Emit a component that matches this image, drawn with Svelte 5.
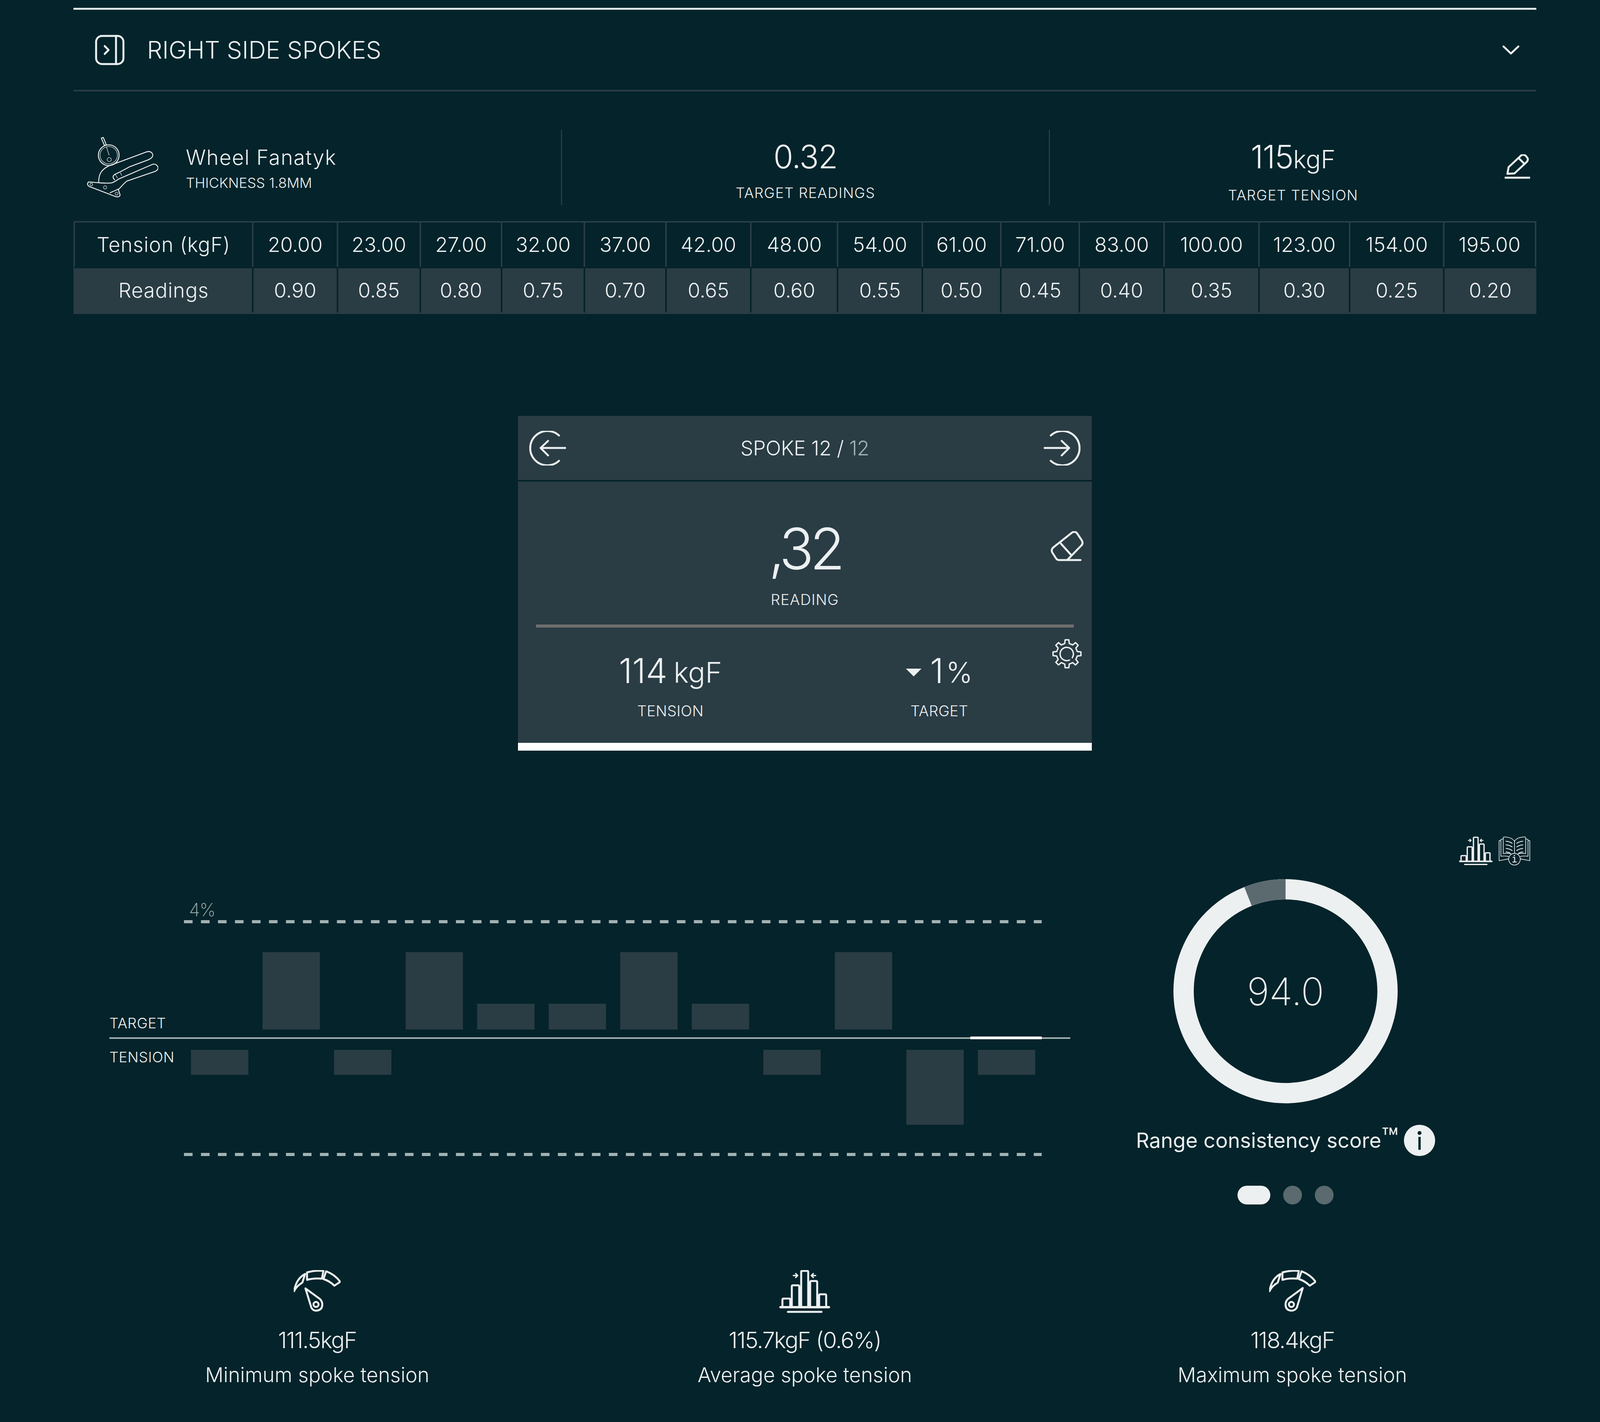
<script>
  const colWidths = [498, 236, 231, 227, 231, 227, 237, 242, 236, 219, 219, 236, 265, 253, 262, 260];
  const tableWidth = colWidths.reduce((a, b) => a + b, 0);
  const tensions = ["20.00", "23.00", "27.00", "32.00", "37.00", "42.00", "48.00", "54.00", "61.00", "71.00", "83.00", "100.00", "123.00", "154.00", "195.00"];
  const readings = ["0.90", "0.85", "0.80", "0.75", "0.70", "0.65", "0.60", "0.55", "0.50", "0.45", "0.40", "0.35", "0.30", "0.25", "0.20"];

  // deviation per spoke: positive goes above the target line
  const bars = [-1, 3, -1, 3, 1, 1, 3, 1, -1, 3, -3, -1];

  const stats = [
    { icon: "min", value: "111.5kgF", label: "Minimum spoke tension" },
    { icon: "avg", value: "115.7kgF (0.6%)", label: "Average spoke tension" },
    { icon: "max", value: "118.4kgF", label: "Maximum spoke tension" },
  ];

  function barRect(v, i) {
    const x = 532.6 + 199.5 * i;
    if (v === 3) return { x, y: 138, h: 198 };
    if (v === 1) return { x, y: 270, h: 66 };
    if (v === -1) return { x, y: 388, h: 64 };
    return { x, y: 388, h: 192 };
  }

  function gearPath(cx, cy, ro, ri, teeth) {
    const pts = [];
    const step = (Math.PI * 2) / teeth;
    for (let i = 0; i < teeth; i++) {
      const a = i * step - Math.PI / 2;
      const spread = step * 0.17;
      const base = step * 0.27;
      const p = (r, t) => `${(cx + r * Math.cos(t)).toFixed(1)} ${(cy + r * Math.sin(t)).toFixed(1)}`;
      pts.push(p(ri, a - base), p(ro, a - spread), p(ro, a + spread), p(ri, a + base));
    }
    return "M" + pts.join(" L") + " Z";
  }
</script>

{#snippet barsIcon(w, h)}
  <svg class="line-icon" width={w} height={h} viewBox="0 0 130 110">
    <path d="M8 92V76q0-3 3-3h14q3 0 3 3v16M32 92V42q0-3 3-3h13q3 0 3 3v50M56 92V5q0-3 3-3h12q3 0 3 3v87M79 92V31q0-3 3-3h12q3 0 3 3v61M102 92V65q0-3 3-3h12q3 0 3 3v27" />
    <path d="M3 95H127" stroke-width="6" />
    <path d="M22 107H108" stroke-width="5" />
    <path d="M36 14H46M42 9l5 5-5 5M93 14H83M87 9l-5 5 5 5" stroke-width="3.500" />
  </svg>
{/snippet}

{#snippet gauge(needle)}
  <svg class="line-icon" width="120" height="108" viewBox="0 0 120 108">
    <path d="M29 10Q6 22 1 54 6 42 22 32Z" />
    <path d="M34 6Q55 0 76 2L72 22Q52 20 34 25Z" />
    <path d="M83 3Q106 12 119 30L104 40Q92 28 76 23Z" />
    <path d={needle} />
    <circle cx="57" cy="88" r="6.500" />
  </svg>
{/snippet}

<div class="page">
  <div class="top-line"></div>

  <header class="acc-head">
    <svg class="line-icon" width="76" height="78" viewBox="0 0 76 78">
      <rect x="3" y="3" width="70" height="72" rx="15" />
      <path d="M54 3V75" />
      <path d="M25 29l10 10-10 10" />
    </svg>
    <h2>RIGHT SIDE SPOKES</h2>
    <svg class="line-icon" width="44" height="26" viewBox="0 0 44 26">
      <path d="M3 4L22 22 41 4" />
    </svg>
  </header>

  <section class="info">
    <div class="info-tool">
      <svg class="tool-icon" width="183" height="157" viewBox="85 88 552 472">
        <g fill="none" stroke="#ecf0f1" stroke-width="7" stroke-linecap="round" stroke-linejoin="round">
          <circle cx="255" cy="230" r="80" />
          <path d="M198 98L213 93 236 150 222 155Z" />
          <path d="M177 438C178 385 190 345 255 313L545 205C585 192 605 225 590 245 582 256 570 262 555 268L415 320 345 358 303 378C290 384 285 395 292 410L300 420" />
          <path d="M100 437C120 437 230 450 270 445 295 442 310 428 330 415L590 302C615 290 640 315 635 335 630 350 615 355 600 360L395 430C375 445 350 475 335 490L265 520" />
          <path d="M100 437C88 445 88 462 105 472L295 545C315 555 345 555 342 535L328 492" />
          <path d="M238 168L258 230" stroke-width="4" />
          <g stroke-width="4">
            <circle cx="255" cy="230" r="67" />
            <circle cx="259" cy="264" r="16" />
            <circle cx="120" cy="456" r="10" />
            <circle cx="227" cy="479" r="12" />
            <circle cx="316" cy="527" r="11" />
            <path d="M307 382L322 406M345 366L355 386" />
          </g>
        </g>
      </svg>
      <div class="tool-text">
        <div class="tool-name">Wheel Fanatyk</div>
        <div class="tool-sub">THICKNESS 1.8MM</div>
      </div>
    </div>
    <div class="info-cell">
      <div class="info-val">0.32</div>
      <div class="info-label">TARGET READINGS</div>
    </div>
    <div class="info-cell">
      <div class="info-val">115<small>kgF</small></div>
      <div class="info-label">TARGET TENSION</div>
      <svg class="line-icon pencil" width="65" height="63" viewBox="0 0 65 63">
        <path d="M7 50L10 33 42 3Q48-1 54 4L58 9Q61 14 57 19L25 49Z" />
        <path d="M36 10L51 25" />
        <path d="M0 60H65" />
      </svg>
    </div>
  </section>

  <table class="chart-table">
    <colgroup>
      {#each colWidths as w}<col style="width:{(w / tableWidth) * 100}%" />{/each}
    </colgroup>
    <tbody>
      <tr class="tension-row">
        <td>Tension (kgF)</td>
        {#each tensions as t}<td>{t}</td>{/each}
      </tr>
      <tr class="reading-row">
        <td>Readings</td>
        {#each readings as r}<td>{r}</td>{/each}
      </tr>
    </tbody>
  </table>

  <section class="card">
    <div class="card-head">
      <svg class="line-icon" width="95" height="89" viewBox="0 0 95 89">
        <path d="M77 12A44 44 0 1 0 77 77" />
        <path d="M93 44H30M49 26L30 44 49 63" />
      </svg>
      <div class="spoke-name">SPOKE 12 / <span>12</span></div>
      <svg class="line-icon" width="95" height="89" viewBox="0 0 95 89">
        <path d="M18 12A44 44 0 1 1 18 77" />
        <path d="M2 44H65M46 26L65 44 46 63" />
      </svg>
    </div>
    <div class="card-body">
      <svg class="line-icon eraser" width="84" height="78" viewBox="0 0 84 78">
        <path d="M54 4Q61-1 67 5L79 23Q84 31 78 37L42 74H21Q16 74 13 69L4 55Q0 48 6 42Z" />
        <path d="M26 32L53 62" />
        <path d="M42 74H76" />
      </svg>
      <svg class="line-icon gear" width="81" height="76" viewBox="0 0 81 76">
        <path d={gearPath(40.5, 38, 36, 27, 8)} stroke-width="3.500" />
        <path d="M47 54A17 17 0 1 1 54 48" stroke-width="3.500" />
      </svg>
      <div class="reading-val">,32</div>
      <div class="unit-label reading-label">READING</div>
      <div class="divider"></div>
      <div class="card-split">
        <div>
          <div class="split-val">114<small>kgF</small></div>
          <div class="unit-label">TENSION</div>
        </div>
        <div>
          <div class="split-val">
            <svg class="tri" width="40" height="20" viewBox="0 0 40 20"><path d="M0 0H40L20 20Z" /></svg>
            1<small class="pct">%</small>
          </div>
          <div class="unit-label">TARGET</div>
        </div>
      </div>
    </div>
  </section>

  <section class="results">
    <div class="chart">
      <svg viewBox="305 0 2680 670" preserveAspectRatio="none">
        <line class="dash" x1="513" x2="2905" y1="60" y2="60" />
        {#each bars as v, i}
          {@const b = barRect(v, i)}
          <rect x={b.x} y={b.y} width="160" height={b.h} fill="#2a3c44" />
        {/each}
        <line x1="305" x2="2985" y1="358" y2="358" stroke="#a2b2b2" stroke-width="4" />
        <line x1="2706" x2="2905" y1="357.5" y2="357.5" stroke="#ffffff" stroke-width="7" />
        <line class="dash" x1="513" x2="2905" y1="656" y2="656" />
      </svg>
      <span class="axis-pct">4%</span>
      <span class="axis-name target">TARGET</span>
      <span class="axis-name tension">TENSION</span>
    </div>

    <div class="score">
      <div class="score-tools">
        {@render barsIcon(86, 74)}
        <svg class="line-icon book" width="82" height="74" viewBox="0 0 245 223">
          <path d="M123 35C105 12 75 3 45 3 38 3 36 6 36 10V132C70 125 95 130 105 142" />
          <path d="M123 35C140 12 170 3 200 3 207 3 209 6 209 10V132C175 125 150 130 140 142" />
          <path d="M123 35V130" />
          <path d="M36 18L18 22V152C50 147 70 150 90 160M209 18L227 22V152C195 147 175 150 155 160" />
          <path d="M18 30L4 32V186L78 172M227 30L241 32V186L167 172" />
          <path d="M58 36Q85 38 105 52M58 64Q85 66 105 80M58 92Q85 94 105 108M58 118Q75 120 90 128M187 36Q160 38 140 52M187 64Q160 66 140 80M187 92Q160 94 140 108M187 118Q170 120 155 128" stroke-width="6" />
          <circle cx="122.500" cy="175" r="45" fill="#04232a" />
          <path d="M112 160H124V196M110 196H136" stroke-width="7" />
          <path d="M122 146V148" stroke-width="9" />
        </svg>
      </div>
      <div class="score-main">
        <div class="ring">
          <svg width="574" height="574" viewBox="0 0 574 574">
            <circle cx="287" cy="287" r="261" fill="none" stroke="#ecf0f1" stroke-width="52" />
            <circle cx="287" cy="287" r="261" fill="none" stroke="#5a6a6e" stroke-width="52"
              stroke-dasharray="98.400 1541.500" transform="rotate(-111.6 287 287)" />
          </svg>
          <div class="ring-val">94.0</div>
        </div>
        <div class="score-label">
          <span>Range consistency score<span class="tm">™</span></span>
          <svg width="80" height="80" viewBox="0 0 80 80">
            <circle cx="40" cy="40" r="40" fill="#ecf0f1" />
            <circle cx="40" cy="21" r="5" fill="#04232a" />
            <rect x="37" y="31" width="6" height="33" fill="#04232a" />
          </svg>
        </div>
        <div class="pager">
          <span class="pill"></span><span class="dot"></span><span class="dot"></span>
        </div>
      </div>
    </div>
  </section>

  <section class="stats">
    {#each stats as s}
      <div class="stat">
        <div class="stat-icon">
          {#if s.icon === "avg"}
            {@render barsIcon(130, 110)}
          {:else if s.icon === "min"}
            {@render gauge("M30 47L45 96Q49 104 57 104 73 103 73 88 73 80 67 74Z")}
          {:else}
            {@render gauge("M86 46L71 96Q66 104 57 104 42 103 42 88 42 80 48 74Z")}
          {/if}
        </div>
        <div class="stat-val">{s.value}</div>
        <div class="stat-label">{s.label}</div>
      </div>
    {/each}
  </section>
</div>

<style>
  :global(body) {
    margin: 0;
    background: #04232a;
  }

  .page {
    --x: calc(100vw / 4462);
    box-sizing: border-box;
    width: 100%;
    min-height: 3641px;
    padding: 20px calc(178 * var(--x)) 0 calc(205 * var(--x));
    overflow: hidden;
    color: #ecf0f1;
    font-family: Inter, "Liberation Sans", sans-serif;
    font-weight: 300;
  }

  .line-icon {
    display: block;
    flex: none;
    fill: none;
    stroke: #ecf0f1;
    stroke-width: 5;
    stroke-linecap: round;
    stroke-linejoin: round;
  }

  .top-line {
    height: 5px;
    background: #dfe6e7;
  }

  .acc-head {
    display: flex;
    align-items: center;
    height: 205px;
    padding: 0 calc(46 * var(--x)) 0 calc(60 * var(--x));
    border-bottom: 4px solid #2a3c44;
  }
  .acc-head h2 {
    flex: 1;
    margin: 0 0 0 calc(62 * var(--x));
    font-size: 62px;
    font-weight: 300;
  }

  .info {
    display: grid;
    grid-template-columns: 1359fr 1361fr 1359fr;
    height: 193px;
    margin-top: 98px;
  }
  .info-tool {
    display: flex;
    align-items: center;
    padding-left: calc(37 * var(--x));
  }
  .tool-icon {
    flex: none;
  }
  .tool-text {
    margin: 4px 0 0 calc(77 * var(--x));
  }
  .tool-name {
    font-size: 53px;
    line-height: 60px;
    letter-spacing: 0.03em;
  }
  .tool-sub {
    margin-top: 15px;
    font-size: 36px;
    line-height: 40px;
  }
  .info-cell {
    position: relative;
    border-left: 3px solid #2a3c44;
    padding-top: 25px;
    text-align: center;
  }
  .info-val {
    font-size: 82px;
    line-height: 90px;
    letter-spacing: -1.5px;
  }
  .info-val small {
    font-size: 64px;
    letter-spacing: 0;
  }
  .info-label {
    margin-top: 25px;
    font-size: 37px;
    line-height: 44px;
    letter-spacing: 0.035em;
  }
  .pencil {
    position: absolute;
    right: calc(17 * var(--x));
    top: 63px;
  }

  .chart-table {
    width: 100%;
    margin-top: 41px;
    table-layout: fixed;
    border-collapse: separate;
    border-spacing: 0;
    border-top: 4px solid #2a3c44;
    border-bottom: 4px solid #2a3c44;
    font-size: 52px;
  }
  .chart-table td {
    box-sizing: border-box;
    padding: 0;
    text-align: center;
  }
  .chart-table td:first-child {
    letter-spacing: 1px;
  }
  .tension-row td {
    height: 113px;
    border-left: 4px solid #2a3c44;
  }
  .tension-row td:last-child {
    border-right: 4px solid #2a3c44;
  }
  .reading-row td {
    height: 117px;
    border-top: 4px solid #04232a;
    border-left: 4px solid #04232a;
    background: #2a3c44;
    background-clip: padding-box;
  }
  .reading-row td:first-child {
    border-left-color: #2a3c44;
  }

  .card {
    width: calc(1600 * var(--x));
    margin: 261px auto 0;
    background: #2a3c44;
    border-bottom: 20px solid #ffffff;
  }
  .card-head {
    display: flex;
    align-items: center;
    justify-content: space-between;
    box-sizing: border-box;
    height: 168px;
    padding: 0 calc(30 * var(--x));
    border-bottom: 4px solid #04232a;
  }
  .spoke-name {
    font-size: 52px;
    letter-spacing: -0.5px;
  }
  .spoke-name span {
    color: #a2b2b2;
  }
  .card-body {
    position: relative;
    box-sizing: border-box;
    height: 669px;
    padding: 97px calc(50 * var(--x)) 0;
    text-align: center;
  }
  .eraser {
    position: absolute;
    top: 127px;
    right: calc(23 * var(--x));
  }
  .gear {
    position: absolute;
    top: 403px;
    right: calc(25 * var(--x));
  }
  .reading-val {
    font-size: 146px;
    line-height: 150px;
    letter-spacing: -10px;
  }
  .unit-label {
    margin-top: 28px;
    font-size: 38px;
    line-height: 50px;
    letter-spacing: 0.01em;
  }
  .reading-label {
    margin-top: 30px;
    letter-spacing: 0.03em;
  }
  .divider {
    height: 8px;
    margin-top: 39px;
    background: #6e6e6e;
  }
  .card-split {
    display: grid;
    grid-template-columns: 1fr 1fr;
    margin-top: 60px;
  }
  .split-val {
    display: flex;
    align-items: center;
    justify-content: center;
    font-size: 88px;
    line-height: 90px;
  }
  .split-val small {
    margin-left: 16px;
    font-size: 73px;
    padding-top: 10px;
  }
  .split-val .pct {
    margin-left: 6px;
  }
  .tri {
    margin: 10px 22px 0 0;
    fill: #ecf0f1;
  }

  .results {
    display: flex;
    margin-top: 220px;
  }
  .chart {
    position: relative;
    flex: none;
    width: calc(2680 * var(--x));
    height: 670px;
    margin: 158px 0 0 calc(100 * var(--x));
  }
  .chart svg {
    display: block;
    width: 100%;
    height: 100%;
  }
  .dash {
    stroke: #a2b2b2;
    stroke-width: 8;
    stroke-dasharray: 24 23.400;
  }
  .axis-name,
  .axis-pct {
    position: absolute;
    left: 0;
    line-height: 50px;
    font-size: 37px;
    letter-spacing: 0.015em;
  }
  .target {
    top: 295px;
  }
  .tension {
    top: 382px;
  }
  .axis-pct {
    left: calc(222 * var(--x));
    top: 4px;
    color: #a2b2b2;
    font-size: 46px;
    font-weight: 200;
    letter-spacing: -1px;
  }
  .score {
    flex: 1;
  }
  .score-tools {
    display: flex;
    justify-content: flex-end;
    gap: calc(16 * var(--x));
    padding-right: calc(16 * var(--x));
  }
  .score-main {
    display: flex;
    flex-direction: column;
    align-items: center;
    padding-right: calc(99 * var(--x));
  }
  .ring {
    position: relative;
    width: 574px;
    height: 574px;
    margin: 35px 0 12px;
  }
  .ring svg {
    display: block;
  }
  .ring-val {
    position: absolute;
    inset: 0;
    display: flex;
    align-items: center;
    justify-content: center;
    font-size: 98px;
    font-weight: 200;
  }
  .score-label {
    display: flex;
    align-items: center;
    gap: 14px;
    margin-top: 43px;
    font-size: 53px;
    font-weight: 400;
    white-space: nowrap;
  }
  .tm {
    font-size: 1.35em;
    line-height: 0;
  }
  .pager {
    display: flex;
    gap: 33px;
    margin-top: 76px;
  }
  .pill,
  .dot {
    height: 48px;
    border-radius: 24px;
    background: #5a6a6e;
  }
  .dot {
    width: 48px;
  }
  .pill {
    width: 84px;
    background: #ecf0f1;
  }

  .stats {
    display: grid;
    grid-template-columns: repeat(3, 1fr);
    margin-top: 168px;
    text-align: center;
  }
  .stat-icon {
    display: flex;
    justify-content: center;
    height: 110px;
  }
  .stat-val {
    margin-top: 34px;
    font-size: 58px;
    line-height: 70px;
    letter-spacing: -2px;
  }
  .stat-label {
    margin-top: 25px;
    font-size: 52px;
    line-height: 60px;
  }
</style>
